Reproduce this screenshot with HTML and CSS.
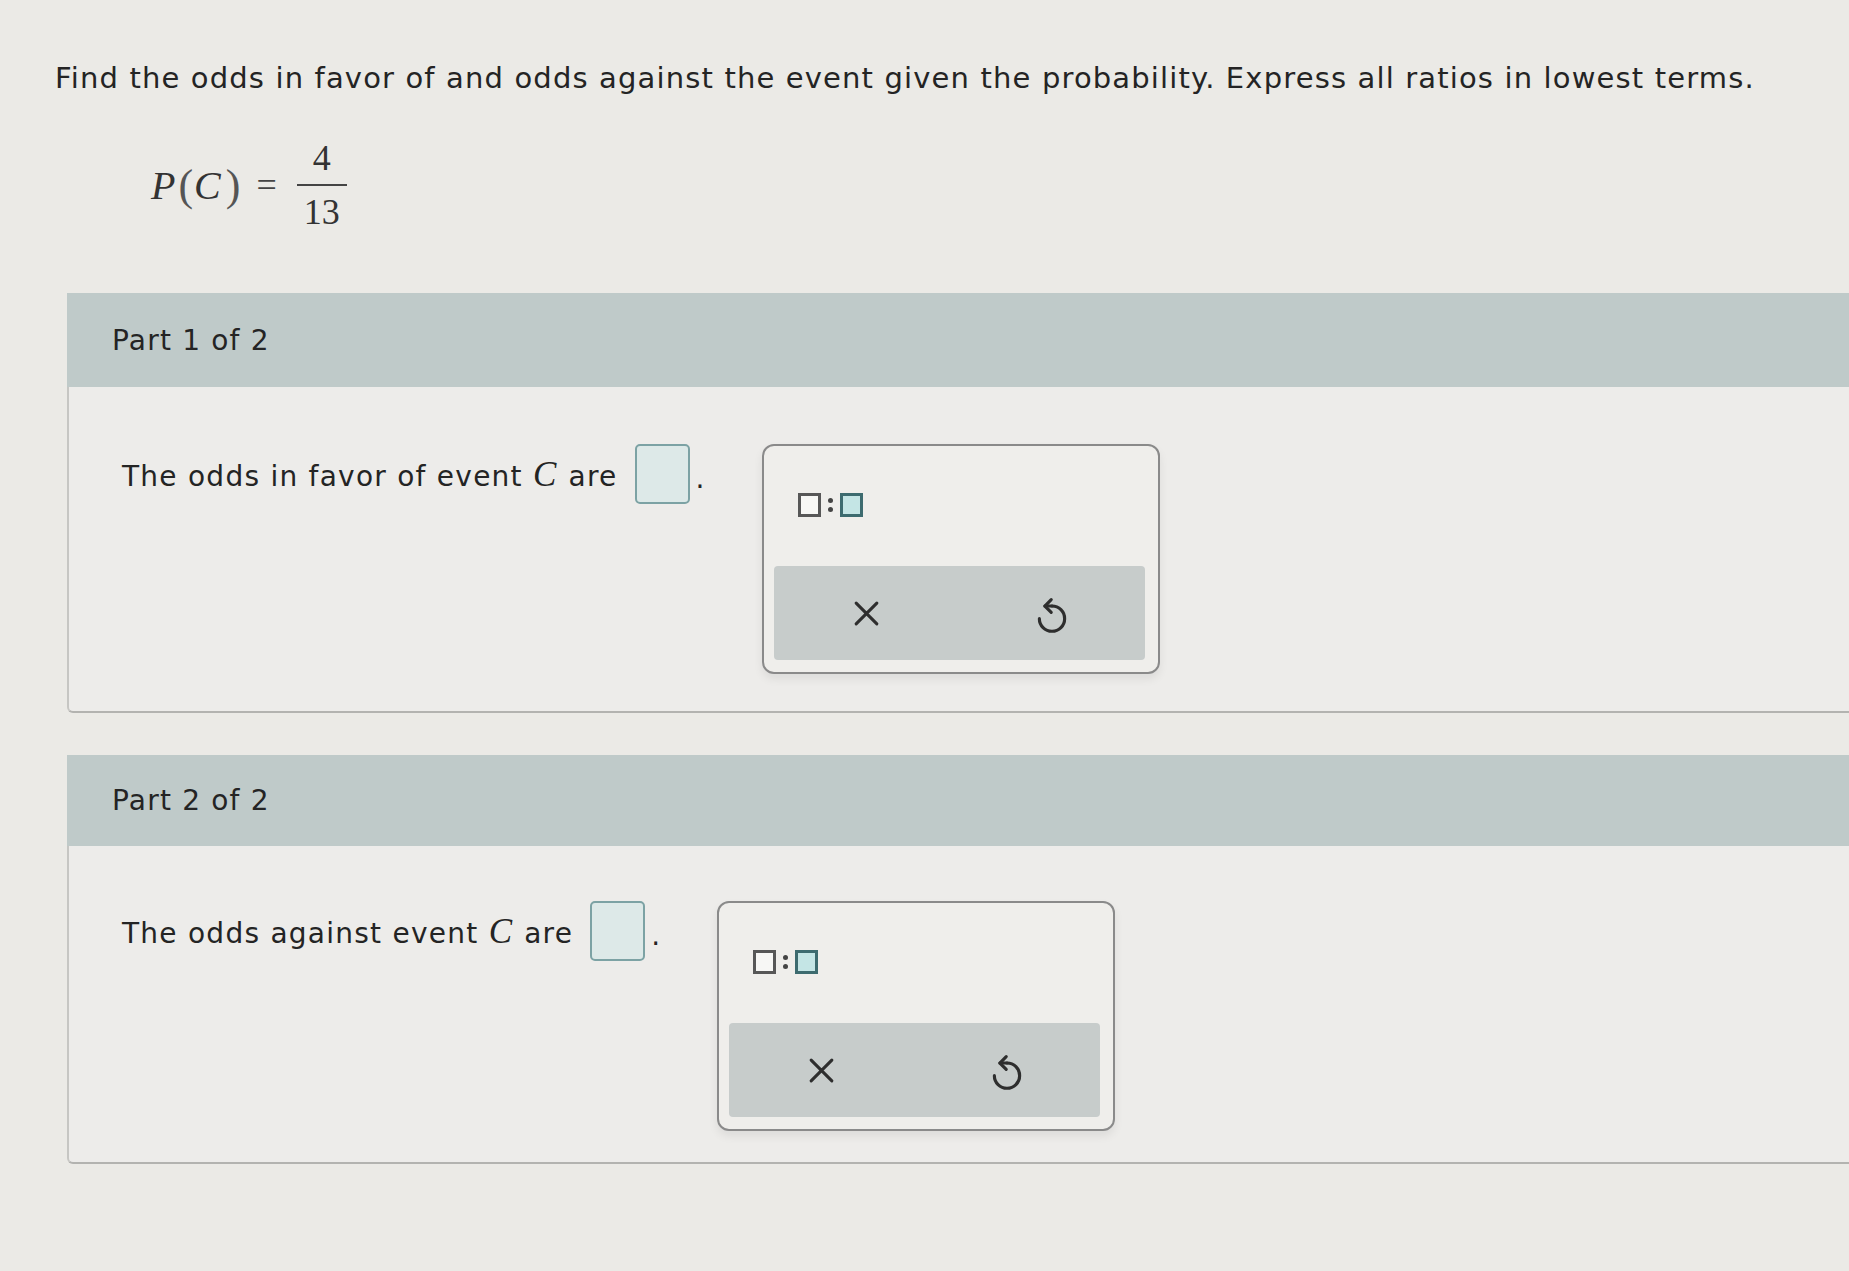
FILE: index.html
```html
<!DOCTYPE html>
<html lang="en">
<head>
<meta charset="utf-8">
<title>Odds in favor and against</title>
<link rel="stylesheet" href="styles.css">
</head>
<body>
<div class="page">
  <p class="prompt">Find the odds in favor of and odds against the event given the probability. Express all ratios in lowest terms.</p>

  <div class="formula">
    <span class="mvar">P</span><span class="paren">(</span><span class="mvar c">C</span><span class="paren">)</span>
    <span class="eq">=</span>
    <span class="frac"><span class="num">4</span><span class="den">13</span></span>
  </div>

  <section class="part">
    <div class="part-head">Part 1 of 2</div>
    <div class="part-body">
      <div class="answer-row">
        <span class="stmt">The odds in favor of event <span class="mvar inline">C</span> are</span>
        <span class="ans-box"></span><span class="dot">.</span>
        <div class="panel">
          <div class="ratio"><span class="sq"></span><span class="colon"></span><span class="sq sq-active"></span></div>
          <div class="tools">
            <button class="tool" type="button" aria-label="Clear">
              <svg class="ico-x" viewBox="0 0 24 24"><path d="M4 4 L20 20 M20 4 L4 20"/></svg>
            </button>
            <button class="tool" type="button" aria-label="Undo">
              <svg class="ico-undo" viewBox="2.5 3.5 19 23"><path d="M12 9 A8 8 0 1 1 4 17"/><path d="M12 9 L7.5 9"/><path d="M11.5 5 L7.5 9 L11.5 13"/></svg>
            </button>
          </div>
        </div>
      </div>
    </div>
  </section>

  <section class="part">
    <div class="part-head">Part 2 of 2</div>
    <div class="part-body">
      <div class="answer-row">
        <span class="stmt">The odds against event <span class="mvar inline">C</span> are</span>
        <span class="ans-box"></span><span class="dot">.</span>
        <div class="panel">
          <div class="ratio"><span class="sq"></span><span class="colon"></span><span class="sq sq-active"></span></div>
          <div class="tools">
            <button class="tool" type="button" aria-label="Clear">
              <svg class="ico-x" viewBox="0 0 24 24"><path d="M4 4 L20 20 M20 4 L4 20"/></svg>
            </button>
            <button class="tool" type="button" aria-label="Undo">
              <svg class="ico-undo" viewBox="2.5 3.5 19 23"><path d="M12 9 A8 8 0 1 1 4 17"/><path d="M12 9 L7.5 9"/><path d="M11.5 5 L7.5 9 L11.5 13"/></svg>
            </button>
          </div>
        </div>
      </div>
    </div>
  </section>
</div>
</body>
</html>
```

FILE: styles.css
```css
* { box-sizing: border-box; }

html, body {
  margin: 0;
  padding: 0;
  background: #ebeae6;
  overflow: hidden;
}

body {
  font-family: "DejaVu Sans", Verdana, sans-serif;
  color: #242424;
}

.page {
  padding: 59px 0 0 55px;
  width: 1849px;
  height: 1271px;
}

.prompt {
  margin: 0;
  font-size: 29px;
  letter-spacing: 1.15px;
  line-height: 38px;
  white-space: nowrap;
}

.formula {
  display: flex;
  align-items: center;
  margin: 40px 0 0 96px;
  height: 96px;
  font-family: "Liberation Serif", "Times New Roman", serif;
  color: #333;
}

.mvar {
  font-family: "Liberation Serif", "Times New Roman", serif;
  font-style: italic;
  font-size: 40px;
}

.mvar.c { margin: 0 2px 0 1px; }

.paren {
  font-size: 44px;
  color: #555;
  margin-left: 3px;
}

.eq {
  font-size: 36px;
  margin: 0 20px 0 16px;
  color: #444;
}

.frac {
  display: inline-flex;
  flex-direction: column;
  align-items: center;
  font-size: 36px;
  line-height: 1;
}

.frac .num {
  padding: 0 2px 8px;
  border-bottom: 2px solid #444;
  width: 50px;
  text-align: center;
}

.frac .den {
  padding-top: 8px;
}

.part {
  margin: 60px -30px 0 12px;
}

.part + .part {
  margin-top: 42px;
}

.part-head {
  height: 94px;
  background: #bfcac9;
  display: flex;
  align-items: center;
  padding-left: 45px;
  font-size: 28px;
  letter-spacing: 1.2px;
}

.part + .part .part-head {
  height: 91px;
}

.part-body {
  height: 326px;
  border-left: 2px solid #c6c6c3;
  border-bottom: 2px solid #b3b3b0;
  border-bottom-left-radius: 6px;
  background: #edecea;
  padding: 57px 0 0 53px;
}

.part + .part .part-body {
  height: 318px;
  padding-top: 55px;
}

.answer-row {
  display: flex;
  align-items: flex-start;
}

.stmt {
  font-size: 28px;
  letter-spacing: 1.25px;
  line-height: 36px;
  margin-top: 13px;
  white-space: nowrap;
}

.mvar.inline {
  font-size: 35px;
  letter-spacing: 0;
  margin-right: 2px;
}

.ans-box {
  width: 55px;
  height: 60px;
  margin-left: 17px;
  border: 2px solid #7ca2a4;
  border-radius: 5px;
  background: #dde9e8;
}

.dot {
  width: 16px;
  margin-left: 6px;
  margin-top: 17px;
  font-size: 28px;
  line-height: 36px;
}

.panel {
  margin-left: 50px;
  width: 398px;
  height: 230px;
  border: 2px solid #8a8a8a;
  border-radius: 12px;
  background: #efeeeb;
  padding: 10px 13px 12px 10px;
  box-shadow: 0 5px 10px rgba(0, 0, 0, 0.07);
  display: flex;
  flex-direction: column;
}

.ratio {
  height: 110px;
  display: flex;
  align-items: flex-start;
  padding: 37px 0 0 24px;
}

.sq {
  width: 23px;
  height: 24px;
  border: 3px solid #575757;
  background: #f7f7f5;
}

.sq-active {
  border-color: #3d6b6f;
  background: #c4e5e5;
}

.colon {
  width: 19px;
  height: 24px;
  position: relative;
}

.colon::before,
.colon::after {
  content: "";
  position: absolute;
  left: 7px;
  width: 5px;
  height: 5px;
  border-radius: 50%;
  background: #444;
}

.colon::before { top: 5px; }
.colon::after { top: 14px; }

.tools {
  flex: 1;
  display: flex;
  background: #c7cccb;
  border-radius: 4px;
}

.tool {
  flex: 1;
  border: 0;
  background: transparent;
  padding: 0;
  display: flex;
  align-items: center;
  justify-content: center;
}

.ico-x {
  width: 31px;
  height: 31px;
  fill: none;
  stroke: #2e2e2e;
  stroke-width: 2.4;
  stroke-linecap: round;
}

.ico-undo {
  width: 30px;
  height: 37px;
  margin-top: 4px;
  fill: none;
  stroke: #2e2e2e;
  stroke-width: 2;
  stroke-linecap: round;
  stroke-linejoin: round;
}
```
